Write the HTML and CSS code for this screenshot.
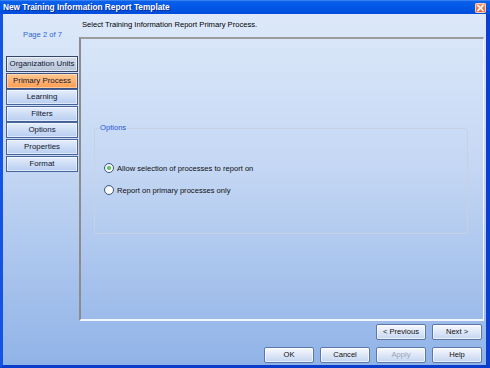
FILE: index.html
```html
<!DOCTYPE html>
<html>
<head>
<meta charset="utf-8">
<link rel="stylesheet" href="styles.css">
</head>
<body>
<div class="window">
  <div class="titlebar">
    <span class="title">New Training Information Report Template</span>
    <span class="close"><svg width="11" height="10" viewBox="0 0 11 10"><path d="M3 2.5 L8 7.5 M8 2.5 L3 7.5" stroke="#fff" stroke-width="1.6" stroke-linecap="square"/></svg></span>
  </div>
  <div class="client">
    <div class="sidebar">
      <div class="page">Page 2 of 7</div>
      <div class="steps">
        <div class="step hover">Organization Units</div>
        <div class="step active">Primary Process</div>
        <div class="step">Learning</div>
        <div class="step">Filters</div>
        <div class="step">Options</div>
        <div class="step">Properties</div>
        <div class="step">Format</div>
      </div>
    </div>
    <div class="main">
      <div class="heading">Select Training Information Report Primary Process.</div>
      <div class="panel">
        <fieldset class="group">
          <legend>Options</legend>
          <div class="opt"><span class="radio checked"></span>Allow selection of processes to report on</div>
          <div class="opt"><span class="radio"></span>Report on primary processes only</div>
        </fieldset>
      </div>
      <div class="row row-nav">
        <span class="btn">&lt; Previous</span>
        <span class="btn">Next &gt;</span>
      </div>
      <div class="row row-main">
        <span class="btn">OK</span>
        <span class="btn">Cancel</span>
        <span class="btn disabled">Apply</span>
        <span class="btn">Help</span>
      </div>
    </div>
  </div>
</div>
</body>
</html>
```
FILE: styles.css
```css
html, body {
  margin: 0;
  padding: 0;
  background: #ffffff;
}
.window {
  width: 490px;
  height: 368px;
  display: flex;
  flex-direction: column;
  font-family: "Liberation Sans", Arial, sans-serif;
  font-size: 7.6px;
  color: #000;
  background: #0848d8;
}
.titlebar {
  height: 14px;
  flex: none;
  display: flex;
  align-items: center;
  justify-content: space-between;
  padding: 0 4px 0 3px;
  background: linear-gradient(#4a90f8 0, #0c60ea 1.5px, #0058e6 50%, #004cdc 100%);
}
.title {
  color: #fff;
  font-weight: bold;
  font-size: 8.3px;
  text-shadow: 1px 1px 0 #0a2a90;
}
.close {
  width: 11px;
  height: 10px;
  margin-top: 1px;
  border-radius: 2px;
  background: linear-gradient(#f49a70, #e65a30);
  box-shadow: inset 0 0 0 1px #f9d0bc;
  display: flex;
}
.client {
  flex: 1;
  display: flex;
  border-left: 3px solid #1454e4;
  border-right: 4px solid #0a3fd0;
  border-bottom: 3px solid #0a3ccc;
  background: linear-gradient(#dde9fa 0%, #c3d6f3 45%, #90b3e7 100%);
}
.sidebar {
  width: 76px;
  flex: none;
  display: flex;
  flex-direction: column;
}
.page {
  color: #2f66d6;
  text-align: center;
  padding-left: 3px;
  margin-top: 16px;
  height: 10px;
  line-height: 10px;
}
.steps {
  margin: 16px 0 0 3px;
  width: 72px;
  display: flex;
  flex-direction: column;
  gap: 0.6px;
}
.step {
  height: 16px;
  box-sizing: border-box;
  border: 1px solid #46649a;
  background: linear-gradient(#e4edfb, #b8cdf0);
  box-shadow: inset 0 0 0 1px rgba(255,255,255,0.55);
  text-align: center;
  line-height: 14px;
  font-size: 7.9px;
  color: #101830;
}
.step.hover {
  background: linear-gradient(#d8dfec, #b7c3d8);
  border-color: #34466a;
}
.step.active {
  background: linear-gradient(#ffc892, #ff9d52);
  border-color: #3e4f82;
  box-shadow: inset 0 0 0 1px rgba(255,230,200,0.6);
}
.main {
  flex: 1;
  display: flex;
  flex-direction: column;
}
.heading {
  height: 23px;
  line-height: 22px;
  padding-left: 3px;
}
.panel {
  height: 284px;
  margin-right: 2px;
  box-sizing: border-box;
  border-top: 2px solid #9c9c9c;
  border-left: 2px solid #8c8c8c;
  border-right: 1px solid #f2f6fc;
  border-bottom: 2px solid #f2f6fc;
  padding: 85px 15px 0 13px;
}
.group {
  margin: 0;
  padding: 0 0 0 9px;
  height: 110px;
  box-sizing: border-box;
  border: 1px solid #c6d2e4;
  border-radius: 3px;
  min-width: 0;
}
.group legend {
  color: #2456d8;
  padding: 0 1px;
  margin-left: -5px;
  line-height: 8px;
}
.opt {
  display: flex;
  align-items: center;
  gap: 3px;
  height: 12px;
  color: #101010;
}
.opt:first-of-type {
  margin-top: 30px;
}
.opt + .opt {
  margin-top: 10px;
}
.radio {
  width: 10px;
  height: 10px;
  box-sizing: border-box;
  border-radius: 50%;
  border: 1px solid #3c5a84;
  background: radial-gradient(circle at 60% 65%, #ffffff 30%, #dfe4ec 100%);
  display: flex;
  align-items: center;
  justify-content: center;
}
.radio.checked::after {
  content: "";
  width: 4px;
  height: 4px;
  border-radius: 50%;
  background: radial-gradient(circle, #6fe06f, #22a022);
}
.row {
  display: flex;
  justify-content: flex-end;
  gap: 6px;
  padding-right: 4px;
}
.row-nav {
  margin-top: 3px;
}
.row-main {
  margin-top: 7px;
}
.btn {
  width: 50px;
  height: 16px;
  box-sizing: border-box;
  border: 1px solid #5d78a8;
  border-radius: 2px;
  background: linear-gradient(#f7f9fe, #dbe5f6 55%, #c4d5f0);
  box-shadow: inset 0 0 0 1px rgba(255,255,255,0.6);
  text-align: center;
  line-height: 14px;
  color: #101010;
}
.btn.disabled {
  color: #98a4b8;
}
```
